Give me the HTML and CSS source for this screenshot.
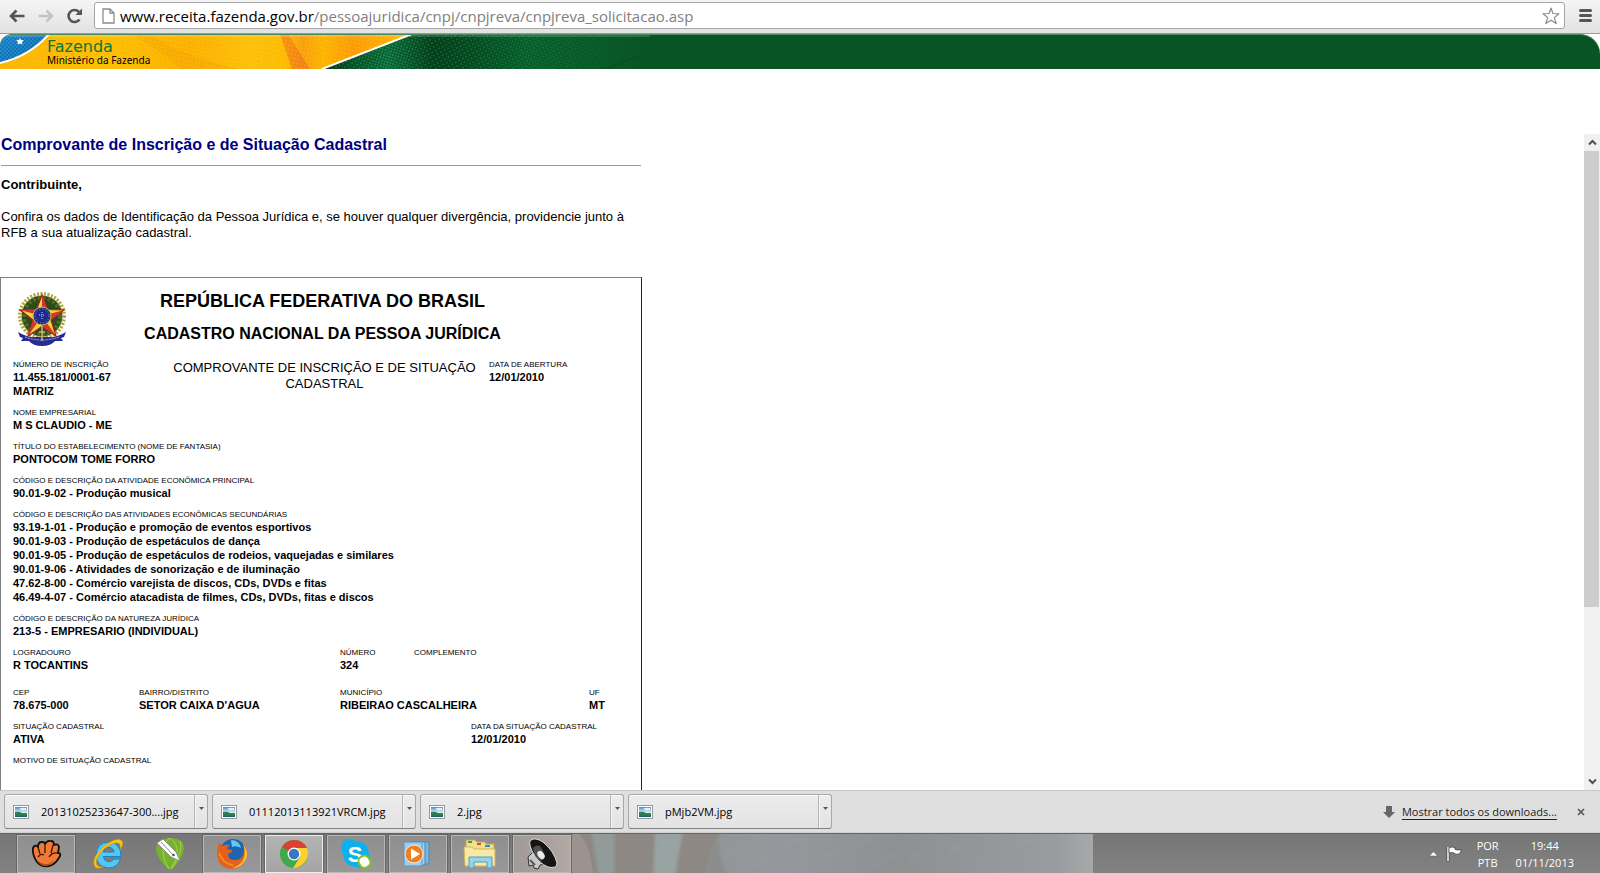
FILE: index.html
```html
<!DOCTYPE html>
<html lang="pt-BR">
<head>
<meta charset="utf-8">
<title>Comprovante de Inscrição e de Situação Cadastral</title>
<link rel="stylesheet" href="styles.css">
</head>
<body>
<svg class="defs" width="0" height="0" aria-hidden="true">
  <defs>
    <linearGradient id="sky" x1="0" y1="0" x2="0" y2="1"><stop offset="0" stop-color="#3c8fd6"/><stop offset=".55" stop-color="#d8eefa"/><stop offset=".6" stop-color="#3d8a63"/><stop offset="1" stop-color="#1e5f74"/></linearGradient>
    <symbol id="picture" viewBox="0 0 16 14">
      <rect x=".5" y=".5" width="15" height="13" fill="#fff" stroke="#9a9a9a"/>
      <rect x="2" y="2" width="12" height="10" fill="url(#sky)"/>
      <path d="M2 7q4-1 7 1t5 0v2H2z" fill="#2f7d4a"/>
      <path d="M6 4q3-2 7-1v2q-4 1-7-1z" fill="#fff" opacity=".8"/>
    </symbol>
    <symbol id="caret" viewBox="0 0 5 3"><path d="M0 0h5L2.500 3z" fill="#555"/></symbol>
  </defs>
</svg>
<div class="window">
  <header class="toolbar">
    <button class="nav" aria-label="Voltar"><svg width="18" height="16" viewBox="0 0 18 16"><path d="M16.500 8H4M8.500 2.500L3 8l5.500 5.500" fill="none" stroke="#555" stroke-width="2.600"/></svg></button>
    <button class="nav" aria-label="Avançar"><svg width="18" height="16" viewBox="0 0 18 16"><path d="M1.500 8H14M9.500 2.500L15 8l-5.500 5.500" fill="none" stroke="#c4c4c4" stroke-width="2.600"/></svg></button>
    <button class="nav" aria-label="Recarregar"><svg width="18" height="16" viewBox="0 0 18 16"><path d="M13.500 11.500A6 6 0 1 1 13 4" fill="none" stroke="#555" stroke-width="2.600"/><path d="M16 .5V7H9.500z" fill="#555"/></svg></button>
    <div class="omnibox">
      <svg width="13" height="16" viewBox="0 0 13 16"><path d="M1 1h7l4 4v10H1zM8 1v4h4" fill="#fff" stroke="#8c8c8c" stroke-width="1.300"/></svg>
      <div class="url">www.receita.fazenda.gov.br<span>/pessoajuridica/cnpj/cnpjreva/cnpjreva_solicitacao.asp</span></div>
      <button class="star" aria-label="Favoritos"><svg width="18" height="18" viewBox="0 0 18 18"><path d="M9 1l1.900 5.500 6.100.3-4.700 3.800 1.900 6L9 13.200l-5.200 3.400 1.900-6L1 6.800l6.100-.3z" fill="#fff" stroke="#8a8a8a" stroke-width="1.200" stroke-linejoin="round"/></svg></button>
    </div>
    <button class="menu" aria-label="Menu"><svg width="13" height="13" viewBox="0 0 13 13"><path d="M1.500 1.500h10M1.500 6.500h10M1.500 11.500h10" stroke="#555" stroke-width="3" stroke-linecap="round"/></svg></button>
  </header>

  <div class="banner">
    <svg class="flag" width="650" height="35" viewBox="0 0 650 35" aria-hidden="true">
      <defs>
        <linearGradient id="yellow"><stop offset="0" stop-color="#ffb800"/><stop offset=".25" stop-color="#ffc400"/><stop offset=".45" stop-color="#ffb400"/><stop offset=".6" stop-color="#ffc60a"/><stop offset=".68" stop-color="#ffc000"/><stop offset=".72" stop-color="#fba010"/><stop offset=".77" stop-color="#ffb800"/><stop offset=".84" stop-color="#ff9c08"/><stop offset="1" stop-color="#ffc800"/></linearGradient>
        <linearGradient id="green"><stop offset="0" stop-color="#053b1c"/><stop offset=".2" stop-color="#12854b"/><stop offset=".34" stop-color="#06451f"/><stop offset=".62" stop-color="#0b6a32"/><stop offset="1" stop-color="#095424"/></linearGradient>
        <linearGradient id="fade"><stop offset="0" stop-color="#fff"/><stop offset=".7" stop-color="#fff"/><stop offset="1" stop-color="#000"/></linearGradient>
        <linearGradient id="blue" x2="1" y2="1"><stop offset="0" stop-color="#1583c9"/><stop offset="1" stop-color="#0b5fa4"/></linearGradient>
        <pattern id="weave" width="4" height="4" patternUnits="userSpaceOnUse" patternTransform="rotate(12)"><path d="M0 1h2M2 3h2" stroke="#e58a00" stroke-width="1" opacity=".38"/><path d="M0 3h2" stroke="#ffe060" stroke-width="1" opacity=".35"/></pattern>
        <pattern id="mesh" width="4" height="4" patternUnits="userSpaceOnUse" patternTransform="rotate(-28)"><path d="M0 1h2M2 3h2" stroke="#02270f" stroke-width="1.300" opacity=".6"/><path d="M0 3h2" stroke="#22a55c" stroke-width="1" opacity=".6"/></pattern>
        <pattern id="net" width="4" height="4" patternUnits="userSpaceOnUse"><path d="M0 1h2M2 3h2" stroke="#5cc0ee" stroke-width="1" opacity=".5"/></pattern>
        <mask id="fademask"><rect width="650" height="35" fill="url(#fade)"/></mask>
      </defs>
      <rect width="420" height="35" fill="url(#yellow)"/>
      <path d="M280 0l12 35h18L288 0z" fill="#ef5a20" opacity=".45"/>
      <path d="M150 0q30 22 90 35h-60Q160 15 130 0z" fill="#f39a00" opacity=".3"/>
      <rect width="420" height="35" fill="url(#weave)"/>
      <path d="M412 0L322 35h328V0z" fill="url(#green)"/>
      <path d="M412 0L322 35h328V0z" fill="url(#mesh)" mask="url(#fademask)"/>
      <path d="M660 10Q630 28 610 35h-12Q640 24 660 10z" fill="#04401b" opacity=".25"/>
      <path d="M412 0L322 35" stroke="#fff" stroke-width="2"/>
      <path d="M0 0h49Q30 22 0 29z" fill="url(#blue)"/>
      <path d="M0 0h49Q30 22 0 29z" fill="url(#net)"/>
      <path d="M49 0Q30 22 0 29" fill="none" stroke="#fff" stroke-width="2"/>
      <path d="M20 4l1 2 3 .3-2 1.700.5 2.500-2.500-1-2.500 1 .5-2.500-2-1.700 3-.3z" fill="#fff"/>
      <rect width="650" height="3" fill="#fff" opacity=".15"/>
    </svg>
    <div class="brand"><strong>Fazenda</strong><span>Ministério da Fazenda</span></div>
  </div>

  <div class="frame">
    <main class="page">
      <section class="intro">
        <h1>Comprovante de Inscrição e de Situação Cadastral</h1>
        <hr>
        <h2>Contribuinte,</h2>
        <p>Confira os dados de Identificação da Pessoa Jurídica e, se houver qualquer divergência, providencie junto à RFB a sua atualização cadastral.</p>
      </section>
      <article class="card">
        <header class="head">
          <svg class="arms" width="50" height="54" viewBox="0 0 50 54" role="img" aria-label="Brasão da República">
            <circle cx="25" cy="24" r="20.500" fill="#2c4a1c"/>
            <circle cx="25" cy="24" r="22" fill="none" stroke="#b3a63c" stroke-width="4" stroke-dasharray="2 1.500"/>
            <circle cx="25" cy="24" r="18" fill="none" stroke="#4d6a26" stroke-width="4" stroke-dasharray="3 2"/>
            <path d="M1 40q10 6 17 5l14 0q7 1 17-5l-2 5-3 1 2 3-8 0q-4 5-13 5t-13-5l-8 0 2-3-3-1z" fill="#262c94"/>
            <path d="M8 45q8 3 17 3t17-3" fill="none" stroke="#aab0dd" stroke-dasharray="2 1"/>
            <path d="M25 3l5.500 14.500L47 18 34 28l5 16-14-9.500L11 44l5-16L3 18l16.500-.5z" fill="#f4d23a" stroke="#a51c1c" stroke-width="1.200"/>
            <path d="M25 3v21l5.500-6.500zM47 18l-22 6 9 4zM39 44L25 24v10.500zM11 44l14-20-9 4zM3 18l22 6-5.500-6.500z" fill="#d2382a"/>
            <path d="M25 34v15M22 40h6" stroke="#c9b870" stroke-width="1.500"/>
            <circle cx="25" cy="24" r="9" fill="#1e2a8c" stroke="#c9b95a"/>
            <circle cx="25" cy="24" r="7" fill="none" stroke="#7fa6e8" stroke-dasharray="1 2"/>
            <path d="M25 20v8M22 23h6" stroke="#b8c8f4" stroke-dasharray="1 1"/>
          </svg>
          <div class="titles">
            <h2 class="republic">REPÚBLICA FEDERATIVA DO BRASIL</h2>
            <h3 class="registry">CADASTRO NACIONAL DA PESSOA JURÍDICA</h3>
          </div>
        </header>
        <div class="groups">
          <div class="row top">
            <dl><dt>NÚMERO DE INSCRIÇÃO</dt><dd>11.455.181/0001-67</dd><dd>MATRIZ</dd></dl>
            <h4>COMPROVANTE DE INSCRIÇÃO E DE SITUAÇÃO CADASTRAL</h4>
            <dl><dt>DATA DE ABERTURA</dt><dd>12/01/2010</dd></dl>
          </div>
          <dl><dt>NOME EMPRESARIAL</dt><dd>M S CLAUDIO - ME</dd></dl>
          <dl><dt>TÍTULO DO ESTABELECIMENTO (NOME DE FANTASIA)</dt><dd>PONTOCOM TOME FORRO</dd></dl>
          <dl><dt>CÓDIGO E DESCRIÇÃO DA ATIVIDADE ECONÔMICA PRINCIPAL</dt><dd>90.01-9-02 - Produção musical</dd></dl>
          <dl><dt>CÓDIGO E DESCRIÇÃO DAS ATIVIDADES ECONÔMICAS SECUNDÁRIAS</dt>
            <dd>93.19-1-01 - Produção e promoção de eventos esportivos</dd>
            <dd>90.01-9-03 - Produção de espetáculos de dança</dd>
            <dd>90.01-9-05 - Produção de espetáculos de rodeios, vaquejadas e similares</dd>
            <dd>90.01-9-06 - Atividades de sonorização e de iluminação</dd>
            <dd>47.62-8-00 - Comércio varejista de discos, CDs, DVDs e fitas</dd>
            <dd>46.49-4-07 - Comércio atacadista de filmes, CDs, DVDs, fitas e discos</dd></dl>
          <dl><dt>CÓDIGO E DESCRIÇÃO DA NATUREZA JURÍDICA</dt><dd>213-5 - EMPRESARIO (INDIVIDUAL)</dd></dl>
          <div class="row street">
            <dl><dt>LOGRADOURO</dt><dd>R TOCANTINS</dd></dl>
            <dl><dt>NÚMERO</dt><dd>324</dd></dl>
            <dl><dt>COMPLEMENTO</dt></dl>
          </div>
          <div class="row city">
            <dl><dt>CEP</dt><dd>78.675-000</dd></dl>
            <dl><dt>BAIRRO/DISTRITO</dt><dd>SETOR CAIXA D'AGUA</dd></dl>
            <dl><dt>MUNICÍPIO</dt><dd>RIBEIRAO CASCALHEIRA</dd></dl>
            <dl><dt>UF</dt><dd>MT</dd></dl>
          </div>
          <div class="row status">
            <dl><dt>SITUAÇÃO CADASTRAL</dt><dd>ATIVA</dd></dl>
            <dl><dt>DATA DA SITUAÇÃO CADASTRAL</dt><dd>12/01/2010</dd></dl>
          </div>
          <dl><dt>MOTIVO DE SITUAÇÃO CADASTRAL</dt></dl>
        </div>
      </article>
    </main>
    <div class="scrollbar">
      <button aria-label="Rolar para cima"><svg width="9" height="7" viewBox="0 0 9 7"><path d="M1 5.500L4.500 2 8 5.500" fill="none" stroke="#505050" stroke-width="2"/></svg></button>
      <div class="thumb"></div>
      <div class="track"></div>
      <button aria-label="Rolar para baixo"><svg width="9" height="7" viewBox="0 0 9 7"><path d="M1 1.500L4.500 5 8 1.500" fill="none" stroke="#505050" stroke-width="2"/></svg></button>
    </div>
  </div>

  <section class="downloads">
    <div class="item"><button class="file"><svg width="16" height="14"><use href="#picture"/></svg>20131025233647-300....jpg</button><button class="more" aria-label="Opções"><svg width="5" height="3"><use href="#caret"/></svg></button></div>
    <div class="item"><button class="file"><svg width="16" height="14"><use href="#picture"/></svg>01112013113921VRCM.jpg</button><button class="more" aria-label="Opções"><svg width="5" height="3"><use href="#caret"/></svg></button></div>
    <div class="item"><button class="file"><svg width="16" height="14"><use href="#picture"/></svg>2.jpg</button><button class="more" aria-label="Opções"><svg width="5" height="3"><use href="#caret"/></svg></button></div>
    <div class="item"><button class="file"><svg width="16" height="14"><use href="#picture"/></svg>pMjb2VM.jpg</button><button class="more" aria-label="Opções"><svg width="5" height="3"><use href="#caret"/></svg></button></div>
    <div class="all">
      <svg width="12" height="12" viewBox="0 0 12 12"><path d="M3 0h6v6h3l-6 6-6-6h3z" fill="#666"/></svg>
      <a href="#">Mostrar todos os downloads...</a>
      <button class="close" aria-label="Fechar"><svg width="8" height="8" viewBox="0 0 8 8"><path d="M1 1l6 6M7 1L1 7" stroke="#555" stroke-width="1.600"/></svg></button>
    </div>
  </section>

  <footer class="taskbar">
    <svg class="wallpaper" width="526" height="40" viewBox="0 0 526 40" preserveAspectRatio="none" aria-hidden="true">
      <defs><linearGradient id="fur"><stop offset="0" stop-color="#939597"/><stop offset=".2" stop-color="#95979c"/><stop offset=".5" stop-color="#8e9092"/><stop offset=".9" stop-color="#999b9f"/><stop offset="1" stop-color="#a6a8a8"/></linearGradient>
      <filter id="soft"><feGaussianBlur stdDeviation="1.500"/></filter></defs>
      <rect width="526" height="40" fill="#8e8885"/>
      <path d="M0 0h12q12 12 14 40H0z" fill="#9c9390"/>
      <g filter="url(#soft)"><path d="M24-4h24l-1 48H32z" fill="#909b9a"/><path d="M88-4h28l-8 48H86z" fill="#98a3a2"/></g>
      <path d="M153 0h373v40H140q0-20 13-40z" fill="url(#fur)"/>
      <path d="M153 0q-4 22 8 40h-21q0-22 13-40z" fill="#8b8d8c" filter="url(#soft)"/>
      <g filter="url(#soft)" stroke="#a9abb0" stroke-width="1" opacity=".45"><path d="M165 20l14-14M185 34l16-10M215 12l22-8M250 26l20-9M285 16l20-12M305 35l28-18M340 26l24-14M380 18l26-12M404 34l20-14M440 14l24-8M456 30l26-12"/></g>
    </svg>
    <button class="app open" aria-label="Luva"><svg width="32" height="30" viewBox="0 0 32 30"><path d="M7 23Q2 16 3 9q2-4 5-1 0-5 4-5 3 0 3 2 2-4 6-3 3 0 3 4 4-2 5 2l-1 6q3 0 2 3-3 6-8 9-9 4-15-3z" fill="#f27a34" stroke="#111" stroke-width="1.800" stroke-linejoin="round"/><path d="M8 8l2 7M15 5v9M23 6l-2 8M8 18q3-4 6-2M28 14q-6-1-9 4" fill="none" stroke="#3a1605" stroke-width="1.300"/><path d="M8 22q8 7 16-1-4 6-9 6-5 0-7-5z" fill="#b94a14"/></svg></button>
    <button class="app" aria-label="Internet Explorer"><svg width="32" height="32" viewBox="0 0 32 32"><path d="M29 18.500H11.500q.5 5 5.500 5 3.500 0 5-2.500h6.500Q25.500 30 16.500 30 4.500 29 4 17 4.500 4.500 17 4q12 1 12 14.500zM11.500 14H22q-.5-4.500-5-4.500-4.800 0-5.500 4.500z" fill="#55c5f2" stroke="#1c82c4"/><path d="M3 29Q-2 20 12 8 24-1 29 2q4 3-1 10 1-6-2-7-5-1-14 6Q2 21 5 27q2 3 7 1-6 4-9 1z" fill="#f9c514" stroke="#c78d0c" stroke-width=".6"/></svg></button>
    <button class="app" aria-label="CorelDRAW"><svg width="32" height="34" viewBox="0 0 32 34"><path d="M16 1q14 0 14 11-2 12-12 20h-4Q3 22 2 12 3 1 16 1z" fill="#76b32c"/><path d="M16 1Q8 7 9 16q1 9 6 16M16 1q8 6 7 15-1 9-6 16M26 4q4 10-8 27" fill="none" stroke="#a5d257" stroke-width="1"/><path d="M3 6l6-4 13 13 4 9-9-4z" fill="#fff" stroke="#777" stroke-width=".7"/><path d="M7 5l12 13" stroke="#8b8b8b"/><circle cx="19.500" cy="18" r="1.300" fill="#555"/></svg></button>
    <button class="app open" aria-label="Firefox"><svg width="32" height="32" viewBox="0 0 32 32"><circle cx="17" cy="14" r="13" fill="#1d65ae"/><path d="M15 2q8 0 10 8-5-3-9-1z" fill="#65c8f3"/><path d="M3 4l3 4q4-2 8-1-3 2-3 4l5 1q1 2-4 4 0 6 7 6 8 0 9-9 1-6-3-9 6 4 6 12Q29 30 16 31 2 30 1 16 1 9 3 4z" fill="#e5601b"/><path d="M27 6q6 8 3 15-4 9-14 9 10-3 12-10 2-7-1-14z" fill="#fdc52d"/><path d="M3 15q4 11 14 12" fill="none" stroke="#f48a22" stroke-width="2"/></svg></button>
    <button class="app open active" aria-label="Chrome"><svg width="30" height="30" viewBox="0 0 30 30"><circle cx="15" cy="15" r="14" fill="#3daa4b"/><path d="M15 15L3 8Q8 1 15 1q9 0 13 8H15z" fill="#dd3f32"/><path d="M15 9h13q3 8-2 14-5 6-12 6l7-11z" fill="#fcd02e"/><circle cx="15" cy="15" r="6.500" fill="#fff"/><circle cx="15" cy="15" r="5.200" fill="#3777c4"/></svg></button>
    <button class="app open" aria-label="Skype"><svg width="32" height="32" viewBox="0 0 32 32"><path d="M9 1q4 0 6 2 13 0 14 13 2 3 1 7-2 7-9 7l-5-1Q4 28 3 16 0 11 2 6q2-5 7-5z" fill="#0cb0ee"/><text x="15" y="24" text-anchor="middle" class="letter">S</text><rect x="19" y="18" width="11" height="12" rx="5" fill="#fff" stroke="#83c41c" stroke-width="2" transform="rotate(-30 24 24)"/></svg></button>
    <button class="app open" aria-label="Media Player"><svg width="32" height="28" viewBox="0 0 32 28"><path d="M10 2h17v22H10z" fill="#7fb7dc" stroke="#4b86b4"/><path d="M6 2h17v23H6z" fill="#a7d0ea" stroke="#4b86b4"/><path d="M2 2h18v24H2z" fill="#9dcdea" stroke="#5b96bf"/><circle cx="12" cy="14" r="9" fill="#f27f1e" stroke="#fff" stroke-width=".8"/><path d="M9 8.500v11l9-5.500z" fill="#fff"/></svg></button>
    <button class="app open" aria-label="Explorador de Arquivos"><svg width="34" height="32" viewBox="0 0 34 32"><path d="M3 2h9l2 2h8l1 2h8v20H3z" fill="#f3df8e" stroke="#c3a34b"/><path d="M5 3h4v2H5z" fill="#27a844"/><path d="M14 5h4v2h-4z" fill="#d84b30"/><path d="M22 7h5v2h-5z" fill="#2d8fd0"/><path d="M1 9h8l2 2h21v17H2z" fill="#f8e9a4" stroke="#d2b55f"/><path d="M6 30V19h23v11h-5v-6H11v6z" fill="#94d5ee" stroke="#4f9cc3"/></svg></button>
    <button class="app open" aria-label="Som"><svg width="34" height="32" viewBox="0 0 34 32"><path d="M3 19l6-6 12 13-6 1-2 4-4-1-1-3-4 1z" fill="#c9c9c9" stroke="#333"/><path d="M5 22l5 5" stroke="#555" stroke-width="2"/><path d="M6 2q-3 2 1 11 6 12 16 16 9 2 9-4Q29 13 18 4 10-1 6 2z" fill="#151515" stroke="#ddd" stroke-width="1"/><path d="M8 10q6-6 10 3t-3 10Q9 18 8 10z" fill="#777" opacity=".6"/><ellipse cx="16" cy="17" rx="3" ry="4.500" transform="rotate(-40 16 17)" fill="#e8e8e8"/></svg></button>
    <div class="tray">
      <svg width="9" height="6" viewBox="0 0 9 6"><path d="M4.500 .5L8.500 5H.5z" fill="#fff" stroke="#555" stroke-width=".5"/></svg>
      <svg width="17" height="16" viewBox="0 0 17 16"><path d="M2 1v14.500" stroke="#444" stroke-width="3"/><path d="M2 1v14" stroke="#fff" stroke-width="1.500"/><path d="M3 1.500q3-1 6 0v2q3 1 6.500 0-1 4-3 4.500-3 1-4.500-1-2.500-1-5 0z" fill="#fff" stroke="#444" stroke-width=".8"/></svg>
      <div class="lang"><span>POR</span><span>PTB</span></div>
      <div class="clock"><time>19:44</time><time>01/11/2013</time></div>
    </div>
  </footer>
</div>
</body>
</html>
```

FILE: styles.css
```css
* { box-sizing: border-box; }
body { margin: 0; background: #fff; color: #000; font-family: "Liberation Sans", Arial, sans-serif; }
button { border: 0; padding: 0; background: none; font: inherit; color: inherit; }
svg { display: block; flex: none; }
h1, h2, h3, h4, p, dl, dd { margin: 0; }
.defs { position: absolute; }
.window { display: flex; flex-direction: column; height: 100vh; overflow: hidden; }

.toolbar { flex: none; display: flex; align-items: center; height: 34px; padding: 0 7px 2px 8px; background: linear-gradient(#f5f5f5, #e2e2e2); border-bottom: 1px solid #999; font-family: "Open Sans", "Noto Sans", sans-serif; }
.nav { width: 18px; margin-right: 11px; }
.nav:nth-child(3) { margin-right: 10px; }
.omnibox { flex: 1; display: flex; align-items: center; height: 27px; padding: 0 4px 0 7px; background: #fff; border: 1px solid #a6a6a6; border-radius: 3px; }
.url { flex: 1; margin-left: 5px; font-size: 15px; line-height: 24px; white-space: nowrap; }
.url span { color: #808080; }
.menu { margin-left: 14px; margin-right: 1px; }

.banner { flex: none; position: relative; height: 35px; background: #095424; border-radius: 12px 20px 0 0; overflow: hidden; border-top: 1px solid #4b8a5e; }
.flag { position: absolute; left: 0; top: -1px; }
.brand { position: relative; display: flex; flex-direction: column; padding: 3px 0 0 47px; }
.brand strong { font: 16px/17px "DejaVu Sans", sans-serif; color: #08783a; }
.brand span { font: 10px/10px "Noto Sans", sans-serif; }

.frame { flex: 1; min-height: 0; display: flex; margin-top: 65px; }
.page { flex: 1; min-width: 0; overflow: hidden; }
.intro { max-width: 641px; padding: 1px 0 36px 1px; }
.intro h1 { font-size: 16px; line-height: 20px; color: #000080; }
.intro hr { height: 1px; margin: 10px 0 11px; border: 0; background: #999; }
.intro h2 { font-size: 13px; line-height: 16px; }
.intro p { margin-top: 16px; font-size: 13px; line-height: 16px; }
.card { max-width: 642px; min-height: 700px; padding: 11px 12px; border: 1px solid #808080; border-right-color: #222; }
.head { display: grid; grid-template-columns: 100px 1fr 97px; margin-bottom: 14px; }
.arms { margin: 3px 0 0 4px; }
.titles { display: grid; gap: 9px; text-align: center; white-space: nowrap; }
.republic { font-size: 18px; line-height: 24px; }
.registry { font-size: 16px; line-height: 24px; }
.groups { display: grid; gap: 10px; }
.row { display: grid; }
.top { grid-template-columns: 147px 329px 1fr; }
.top h4 { padding: 0 8px; font-size: 13px; line-height: 16px; font-weight: 400; text-align: center; }
.street { grid-template-columns: 327px 74px 1fr; margin-bottom: 6px; }
.city { grid-template-columns: 126px 201px 249px 1fr; }
.status { grid-template-columns: 458px 1fr; }
dt { font-size: 8px; line-height: 10px; white-space: nowrap; }
dd { font-size: 11px; line-height: 14px; font-weight: 700; white-space: nowrap; }

.scrollbar { flex: none; display: flex; flex-direction: column; width: 16px; background: #f0f0f0; }
.scrollbar button { height: 17px; display: flex; align-items: center; justify-content: center; }
.thumb { flex: 456; margin-right: 1px; background: #cdcdcd; }
.track { flex: 166; }

.downloads { flex: none; display: flex; align-items: center; gap: 4px; height: 43px; padding: 0 15px 0 4px; background: #dfdfdf; border-top: 1px solid #c8c8c8; border-bottom: 1px solid #cfcfcf; font: 11px/16px "Open Sans", "Noto Sans", sans-serif; }
.item { display: flex; width: 204px; height: 35px; background: linear-gradient(#ececec, #e3e3e3); border: 1px solid #a8a8a8; border-bottom-color: #808080; border-radius: 3px; box-shadow: inset 0 1px #fff; }
.file { flex: 1; display: flex; align-items: center; gap: 12px; padding-left: 8px; text-align: left; }
.more { width: 13px; display: flex; justify-content: center; padding-top: 12px; border-left: 1px solid #b5b5b5; box-shadow: inset 1px 0 #f5f5f5; }
.all { margin-left: auto; display: flex; align-items: center; }
.all a { margin: 0 20px 0 7px; color: #222; text-underline-offset: 3px; }

.taskbar { flex: none; position: relative; display: flex; gap: 4px; height: 40px; padding: 1px 26px 0 17px; background: linear-gradient(#767676, #828282); border-top: 1px solid #666; color: #fff; font: 11px/17px "Open Sans", "Noto Sans", sans-serif; }
.wallpaper { position: absolute; left: 567px; top: 0; }
.app { position: relative; width: 58px; height: 38px; display: flex; align-items: center; justify-content: center; border: 1px solid transparent; }
.open { background: linear-gradient(#8f8f8f, #989898); border-color: #b8b8b8; outline: 1px solid #666; }
.active { background: linear-gradient(#b4b4b4, #a4a4a4); border-color: #eee; }
.app:nth-last-child(2) { background: linear-gradient(90deg, #a09a98, #b2a8a4); }
.letter { font: 700 22px "Liberation Sans", Arial, sans-serif; fill: #fff; }
.tray { margin-left: auto; display: flex; align-items: center; }
.tray > svg { margin-right: 8px; }
.tray > svg + svg { margin-right: 14px; }
.lang, .clock { display: flex; flex-direction: column; align-items: center; }
.lang { margin-right: 17px; }
```
